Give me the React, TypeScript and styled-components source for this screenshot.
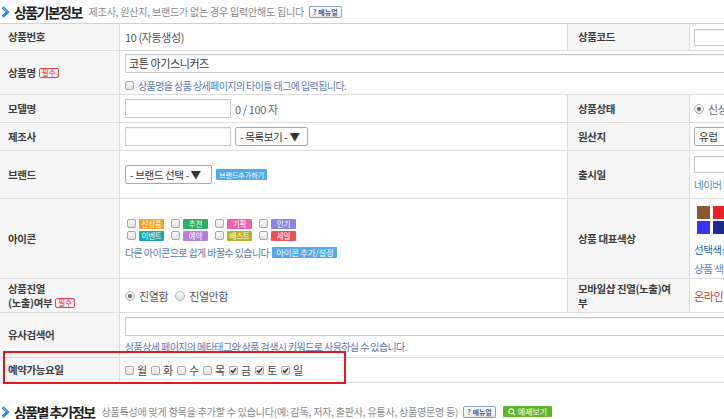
import React from 'react'
import styled, { createGlobalStyle } from 'styled-components'

const GlobalStyle = createGlobalStyle`
  html, body {
    margin: 0;
    padding: 0;
    overflow: hidden;
    background: #fff;
  }
  body {
    font-family: 'Noto Sans CJK KR', 'Noto Sans', sans-serif;
    color: #333;
  }
`

interface IconBadge {
  label: string
  color: string
}

const iconBadges: IconBadge[] = [
  { label: '신상품', color: '#f5a21e' },
  { label: '추천', color: '#2aae62' },
  { label: '기획', color: '#ef62a9' },
  { label: '인기', color: '#8b84df' },
  { label: '이벤트', color: '#17a9ae' },
  { label: '예약', color: '#b67ed8' },
  { label: '베스트', color: '#b5b224' },
  { label: '세일', color: '#ef4f59' },
]

const swatchColors = ['#8c5630', '#e4232a', '#f28c1e', '#f5d21a', '#3434f4', '#1f2a8b', '#222222', '#9a9a9a']

const weekdays = [
  { day: '월', checked: false },
  { day: '화', checked: false },
  { day: '수', checked: false },
  { day: '목', checked: false },
  { day: '금', checked: true },
  { day: '토', checked: true },
  { day: '일', checked: true },
]

// 행 높이 (px)
const rowHeights = [27, 44, 28, 28, 48, 80, 34, 45, 25]

const HeadIcon = () => (
  <svg width='9' height='12' viewBox='0 0 9 12'>
    <path d='M1.6 1.4 L6.6 6 L1.6 10.6' stroke='#2d7fd9' strokeWidth='2.8' fill='none' />
    <path d='M1.6 1.4 L6.6 6' stroke='#8fc3f5' strokeWidth='1' fill='none' />
  </svg>
)

const CheckMark = () => (
  <svg width='7' height='7' viewBox='0 0 7 7'>
    <path d='M1 3.6 L2.8 5.4 L6 1.4' stroke='#333' strokeWidth='1.5' fill='none' />
  </svg>
)

const SearchIcon = () => (
  <svg width='8' height='8' viewBox='0 0 8 8'>
    <circle cx='3.3' cy='3.3' r='2.4' stroke='#fff' strokeWidth='1.1' fill='none' />
    <path d='M5 5 L7.2 7.2' stroke='#fff' strokeWidth='1.2' />
  </svg>
)

const Check: React.FC<{ checked?: boolean }> = ({ checked }) => (
  <CheckBox>{checked && <CheckMark />}</CheckBox>
)

const FieldLabel: React.FC<{ side?: boolean; children: React.ReactNode; extra?: React.ReactNode }> = ({
  side,
  children,
  extra,
}) => (
  <Label $side={side}>
    <span>{children}</span>
    {extra}
  </Label>
)

const App: React.FC = () => {
  return (
    <>
      <GlobalStyle />
      <SectionHead>
        <HeadIcon />
        <HeadTitle>상품기본정보</HeadTitle>
        <HeadSub>제조사, 원산지, 브랜드가 없는 경우 입력안해도 됩니다</HeadSub>
        <ManualButton>? 매뉴얼</ManualButton>
      </SectionHead>

      <FormGrid>
        <FieldLabel>상품번호</FieldLabel>
        <Cell>10 (자동생성)</Cell>
        <FieldLabel side>상품코드</FieldLabel>
        <Cell $right>
          <TextInput $w={130} $h={17} />
        </Cell>

        <FieldLabel>
          상품명 <Required>필수</Required>
        </FieldLabel>
        <Cell $span={3}>
          <Stack $gap={6}>
            <TextInput $w={720} $h={19}>
              코튼 아기스니커즈
            </TextInput>
            <Line>
              <Check />
              <Help>상품명을 상품 상세페이지의 타이틀 태그에 입력됩니다.</Help>
            </Line>
          </Stack>
        </Cell>

        <FieldLabel>모델명</FieldLabel>
        <Cell>
          <Line $gap={4}>
            <TextInput $w={106} $h={19} />
            <Muted>0 / 100 자</Muted>
          </Line>
        </Cell>
        <FieldLabel side>상품상태</FieldLabel>
        <Cell $right>
          <Line>
            <Radio $on />
            <Muted>신상품</Muted>
          </Line>
        </Cell>

        <FieldLabel>제조사</FieldLabel>
        <Cell>
          <Line $gap={4}>
            <TextInput $w={106} $h={19} />
            <SelectBox $w={73}>- 목록보기 - ▼</SelectBox>
          </Line>
        </Cell>
        <FieldLabel side>원산지</FieldLabel>
        <Cell $right>
          <SelectBox $w={80}>유럽</SelectBox>
        </Cell>

        <FieldLabel>브랜드</FieldLabel>
        <Cell>
          <Line $gap={4}>
            <SelectBox $w={87}>- 브랜드 선택 - ▼</SelectBox>
            <BlueButton $small>브랜드추가하기</BlueButton>
          </Line>
        </Cell>
        <FieldLabel side>출시일</FieldLabel>
        <Cell $right $top={5}>
          <Stack $gap={4}>
            <TextInput $w={130} $h={17} />
            <Link>네이버 쇼핑</Link>
          </Stack>
        </Cell>

        <FieldLabel>아이콘</FieldLabel>
        <Cell>
          <Stack $gap={5}>
            <IconGrid>
              {iconBadges.map((b) => (
                <Line key={b.label} $gap={3}>
                  <Check />
                  <Badge $color={b.color}>{b.label}</Badge>
                </Line>
              ))}
            </IconGrid>
            <Line $gap={3}>
              <Help>다른 아이콘으로 쉽게 바꿀수 있습니다</Help>
              <BlueButton>아이콘 추가/설정</BlueButton>
            </Line>
          </Stack>
        </Cell>
        <FieldLabel side>상품 대표색상</FieldLabel>
        <Cell $right $top={7}>
          <Stack $gap={0}>
            <SwatchGrid>
              {swatchColors.map((c) => (
                <Swatch key={c} $color={c} />
              ))}
            </SwatchGrid>
            <Link $dark $mt={8}>
              선택색상 없음
            </Link>
            <Link $mt={4}>상품 색상을 선택하세요</Link>
          </Stack>
        </Cell>

        <FieldLabel>
          상품진열
          <br />
          (노출)여부 <Required>필수</Required>
        </FieldLabel>
        <Cell>
          <Line>
            <Radio $on />
            <RadioText>진열함</RadioText>
            <Radio />
            <RadioText>진열안함</RadioText>
          </Line>
        </Cell>
        <FieldLabel side>
          모바일샵 진열(노출)여
          <br />부
        </FieldLabel>
        <Cell $right>
          <Alert>온라인샵과 동일</Alert>
        </Cell>

        <FieldLabel>유사검색어</FieldLabel>
        <Cell $span={3}>
          <Stack $gap={4}>
            <TextInput $w={720} $h={19} />
            <Help>상품상세 페이지의 메타태그와 상품 검색시 키워드로 사용하실 수 있습니다.</Help>
          </Stack>
        </Cell>

        <FieldLabel extra={<Highlight />}>예약가능요일</FieldLabel>
        <Cell $span={3}>
          <Line $gap={0}>
            {weekdays.map((w) => (
              <DayItem key={w.day}>
                <Check checked={w.checked} />
                <DayText>{w.day}</DayText>
              </DayItem>
            ))}
          </Line>
        </Cell>
      </FormGrid>

      <SectionHead $mt={17}>
        <HeadIcon />
        <HeadTitle>상품별 추가정보</HeadTitle>
        <HeadSub>상품특성에 맞게 항목을 추가할 수 있습니다(예: 감독, 저자, 출판사, 유통사, 상품영문명 등)</HeadSub>
        <ManualButton>? 매뉴얼</ManualButton>
        <GreenButton>
          <SearchIcon />
          예제보기
        </GreenButton>
      </SectionHead>
    </>
  )
}

const SectionHead = styled.div<{ $mt?: number }>`
  display: flex;
  align-items: center;
  height: 23px;
  margin-top: ${(p) => p.$mt ?? 0}px;
  padding-left: 1px;
  white-space: nowrap;
`

const HeadTitle = styled.span`
  margin-left: 4px;
  font-size: 14px;
  font-weight: 700;
  letter-spacing: -1.6px;
  color: #222;
`

const HeadSub = styled.span`
  margin-left: 7px;
  font-size: 10px;
  letter-spacing: -0.2px;
  color: #888;
`

const ManualButton = styled.span`
  display: inline-flex;
  align-items: center;
  height: 10px;
  margin-left: 5px;
  padding: 0 3px;
  border: 1px solid #8fa0b8;
  border-radius: 2px;
  background: linear-gradient(#fff, #e6ebf2);
  font-size: 7px;
  font-weight: 700;
  color: #3f5b85;
`

const GreenButton = styled.span`
  display: inline-flex;
  align-items: center;
  gap: 2px;
  height: 11px;
  margin-left: 7px;
  padding: 0 5px;
  background: #5cb52f;
  border-radius: 1px;
  font-size: 8px;
  color: #fff;
`

const FormGrid = styled.div`
  display: grid;
  width: 830px;
  grid-template-columns: 120px 447px 123px 140px;
  grid-template-rows: ${rowHeights.map((h) => `${h}px`).join(' ')};
  border-top: 1px solid #cfcfcf;
`

const Label = styled.div<{ $side?: boolean }>`
  position: relative;
  box-sizing: border-box;
  display: flex;
  align-items: center;
  padding: 0 ${(p) => (p.$side ? '10px' : '8px')};
  background: #f6f6f6;
  border-bottom: 1px solid #dcdcdc;
  border-right: 1px solid #dcdcdc;
  border-left: ${(p) => (p.$side ? '1px solid #dcdcdc' : 'none')};
  font-size: 10.5px;
  font-weight: 700;
  line-height: 14px;
  letter-spacing: -0.4px;
  color: #3b3b3b;
  white-space: nowrap;
`

const Cell = styled.div<{ $right?: boolean; $top?: number; $span?: number }>`
  box-sizing: border-box;
  grid-column: span ${(p) => p.$span ?? 1};
  display: flex;
  align-items: ${(p) => (p.$top ? 'flex-start' : 'center')};
  min-width: 0;
  padding: ${(p) => p.$top ?? 0}px 0 0 ${(p) => (p.$right ? '4px' : '5px')};
  border-bottom: 1px solid #dcdcdc;
  font-size: 11px;
  letter-spacing: -0.4px;
  color: #555;
  white-space: nowrap;
  overflow: hidden;
`

const Stack = styled.div<{ $gap: number }>`
  display: flex;
  flex-direction: column;
  align-items: flex-start;
  gap: ${(p) => p.$gap}px;
`

const Line = styled.div<{ $gap?: number }>`
  display: flex;
  align-items: center;
  gap: ${(p) => p.$gap ?? 4}px;
`

const TextInput = styled.div<{ $w: number; $h: number }>`
  box-sizing: border-box;
  flex-shrink: 0;
  width: ${(p) => p.$w}px;
  height: ${(p) => p.$h}px;
  padding: 0 3px;
  border: 1px solid #c8c8c8;
  background: #fff;
  box-shadow: inset 0 1px 1px rgba(0, 0, 0, 0.06);
  font-size: 11px;
  line-height: ${(p) => p.$h - 2}px;
  color: #333;
`

const SelectBox = styled.div<{ $w: number }>`
  box-sizing: border-box;
  flex-shrink: 0;
  width: ${(p) => p.$w}px;
  height: 19px;
  padding: 0 4px;
  border: 1px solid #a8a8a8;
  border-radius: 2px;
  background: #fff;
  font-size: 10.5px;
  line-height: 17px;
  color: #333;
`

const Required = styled.span`
  display: inline-block;
  margin-left: 1px;
  padding: 0 2px;
  border: 1px solid #e2434b;
  border-radius: 2px;
  background: #fdeef0;
  font-size: 7.5px;
  line-height: 8px;
  font-weight: 400;
  letter-spacing: 0;
  color: #d9303a;
  vertical-align: 1px;
`

const Help = styled.span`
  font-size: 10px;
  line-height: 13px;
  letter-spacing: -0.6px;
  color: #5c78b0;
`

const Muted = styled.span`
  color: #666;
`

const Link = styled.span<{ $dark?: boolean; $mt?: number }>`
  margin-top: ${(p) => p.$mt ?? 0}px;
  font-size: 10.5px;
  letter-spacing: -0.5px;
  color: ${(p) => (p.$dark ? '#2a69b8' : '#5b86c4')};
`

const Alert = styled.span`
  color: #c0392b;
`

const CheckBox = styled.span`
  box-sizing: border-box;
  display: inline-flex;
  align-items: center;
  justify-content: center;
  width: 9px;
  height: 9px;
  border: 1px solid #a6a6a6;
  border-radius: 2px;
  background: linear-gradient(#fafafa, #e2e2e2);
  flex-shrink: 0;
`

const Radio = styled.span<{ $on?: boolean }>`
  box-sizing: border-box;
  display: inline-flex;
  align-items: center;
  justify-content: center;
  width: 10px;
  height: 10px;
  border: 1px solid #b2b2b2;
  border-radius: 50%;
  background: linear-gradient(#fafafa, #e2e2e2);

  &::after {
    content: '';
    display: ${(p) => (p.$on ? 'block' : 'none')};
    width: 4px;
    height: 4px;
    border-radius: 50%;
    background: #666;
  }
`

const RadioText = styled.span`
  margin-right: 3px;
  color: #555;
`

const BlueButton = styled.span<{ $small?: boolean }>`
  display: inline-flex;
  align-items: center;
  height: 11px;
  padding: 0 ${(p) => (p.$small ? 3 : 4)}px;
  background: #4faaed;
  border-radius: 1px;
  font-size: ${(p) => (p.$small ? 7 : 8.5)}px;
  letter-spacing: ${(p) => (p.$small ? 0 : -0.3)}px;
  color: #fff;
`

const IconGrid = styled.div`
  display: grid;
  grid-template-columns: repeat(4, 44px);
  row-gap: 2px;
  margin-left: 2px;
`

const Badge = styled.span<{ $color: string }>`
  display: inline-flex;
  align-items: center;
  justify-content: center;
  width: 25px;
  height: 10px;
  background: ${(p) => p.$color};
  border-radius: 1px;
  font-size: 7.5px;
  letter-spacing: -0.2px;
  color: #fff;
`

const SwatchGrid = styled.div`
  display: grid;
  grid-template-columns: repeat(4, 13px);
  gap: 2px 3px;
  margin-left: 3px;
`

const Swatch = styled.span<{ $color: string }>`
  width: 13px;
  height: 13px;
  background: ${(p) => p.$color};
`

const DayItem = styled.span`
  display: inline-flex;
  align-items: center;
  gap: 3px;
  width: 26px;
`

const DayText = styled.span`
  font-size: 11px;
  color: #444;
`

const Highlight = styled.span`
  position: absolute;
  left: 3px;
  top: -7px;
  width: 343px;
  height: 33px;
  box-sizing: border-box;
  border: 2px solid #e3171d;
  pointer-events: none;
`

export default App
